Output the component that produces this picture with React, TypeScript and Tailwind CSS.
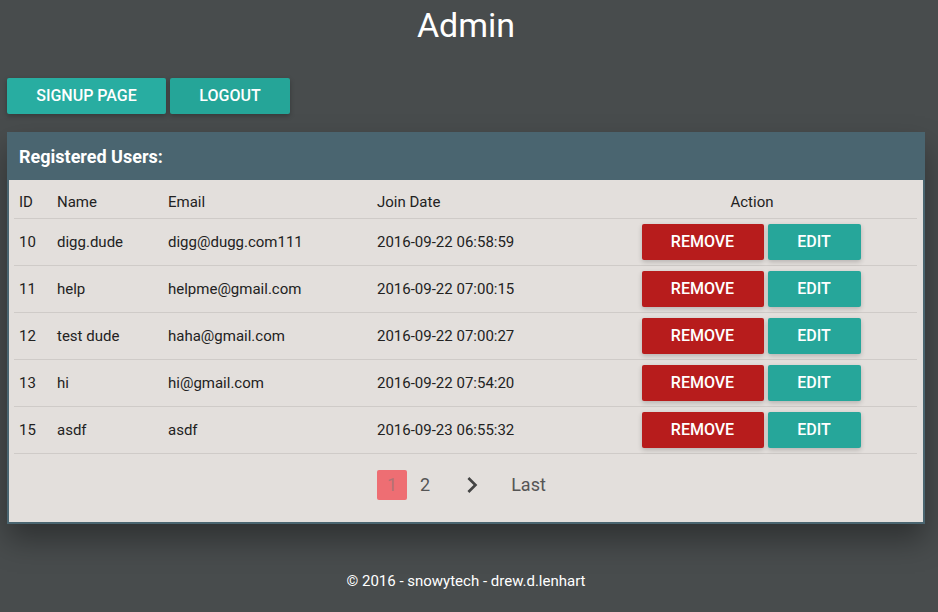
import React from 'react';

const users = [
  { id: 10, name: 'digg.dude', email: 'digg@dugg.com111', joined: '2016-09-22 06:58:59' },
  { id: 11, name: 'help', email: 'helpme@gmail.com', joined: '2016-09-22 07:00:15' },
  { id: 12, name: 'test dude', email: 'haha@gmail.com', joined: '2016-09-22 07:00:27' },
  { id: 13, name: 'hi', email: 'hi@gmail.com', joined: '2016-09-22 07:54:20' },
  { id: 15, name: 'asdf', email: 'asdf', joined: '2016-09-23 06:55:32' },
];

export default function App() {
  return (
    <div className="min-h-screen bg-[#484c4d] font-['Roboto',sans-serif] text-white">
      <h1 className="text-center text-[34px] leading-[50px] pr-[6px]">Admin</h1>

      {/* top buttons */}
      <div className="flex gap-[4px] ml-[7px] mt-[28px]">
        <button className="w-[159px] h-[36px] rounded-[2px] bg-[#28ada1] text-[16px] font-medium uppercase shadow-[0_2px_5px_rgba(0,0,0,0.25)]">
          Signup Page
        </button>
        <button className="w-[120px] h-[36px] rounded-[2px] bg-[#25a598] text-[16px] font-medium uppercase shadow-[0_2px_5px_rgba(0,0,0,0.25)]">
          Logout
        </button>
      </div>

      {/* users card */}
      <div className="ml-[7px] mt-[18px] w-[918px] border-2 border-t-0 border-[#4a6570] bg-[#e3dfdc] shadow-[0_16px_28px_rgba(0,0,0,0.35)]">
        <div className="h-[48px] bg-[#4a6570] flex items-center px-[10px]">
          <h2 className="text-[18px] font-bold">Registered Users:</h2>
        </div>

        <div className="px-[5px] text-[#222] text-[15px]">
          <table className="w-[903px] border-collapse">
            <thead>
              <tr className="h-[38px] border-b border-[#cfcbc8] text-left">
                <th className="w-[38px] pl-[5px] pt-[7px] font-normal">ID</th>
                <th className="w-[111px] pl-[5px] pt-[7px] font-normal">Name</th>
                <th className="w-[209px] pl-[5px] pt-[7px] font-normal">Email</th>
                <th className="w-[215px] pl-[5px] pt-[7px] font-normal">Join Date</th>
                <th className="pt-[7px] font-normal text-center">Action</th>
              </tr>
            </thead>
            <tbody>
              {users.map((u) => (
                <tr key={u.id} className="h-[47px] border-b border-[#cfcbc8]">
                  <td className="pl-[5px] pt-[2px]">{u.id}</td>
                  <td className="pl-[5px] pt-[2px]">{u.name}</td>
                  <td className="pl-[5px] pt-[2px]">{u.email}</td>
                  <td className="pl-[5px] pt-[2px]">{u.joined}</td>
                  <td>
                    <div className="flex justify-center gap-[4px] pr-[2px] pt-[1px]">
                      <button className="w-[122px] h-[36px] rounded-[2px] bg-[#b71c1c] text-white text-[16px] font-medium uppercase shadow-[0_2px_5px_rgba(0,0,0,0.2)]">
                        Remove
                      </button>
                      <button className="w-[93px] h-[36px] rounded-[2px] bg-[#26a69a] text-white text-[16px] font-medium uppercase shadow-[0_2px_5px_rgba(0,0,0,0.2)]">
                        Edit
                      </button>
                    </div>
                  </td>
                </tr>
              ))}
            </tbody>
          </table>

          {/* pagination */}
          <div className="h-[68px] flex items-start justify-center pt-[16px] pr-[9px] text-[18px] text-[#555]">
            <div className="flex items-center h-[30px]">
              <span className="w-[30px] h-[30px] rounded-[2px] bg-[#ee6e73] flex items-center justify-center text-[#b27274]">1</span>
              <span className="w-[36px] text-center">2</span>
              <span className="w-[32px] ml-[13px] flex justify-center">
                <svg width="32" height="32" viewBox="0 0 24 24" fill="#444">
                  <path d="M10 6L8.59 7.41 13.17 12l-4.58 4.59L10 18l6-6z" />
                </svg>
              </span>
              <span className="ml-[23px]">Last</span>
            </div>
          </div>
        </div>
      </div>

      <footer className="mt-[46px] text-center text-[15px] pr-[6px]">© 2016 - snowytech - drew.d.lenhart</footer>
    </div>
  );
}
